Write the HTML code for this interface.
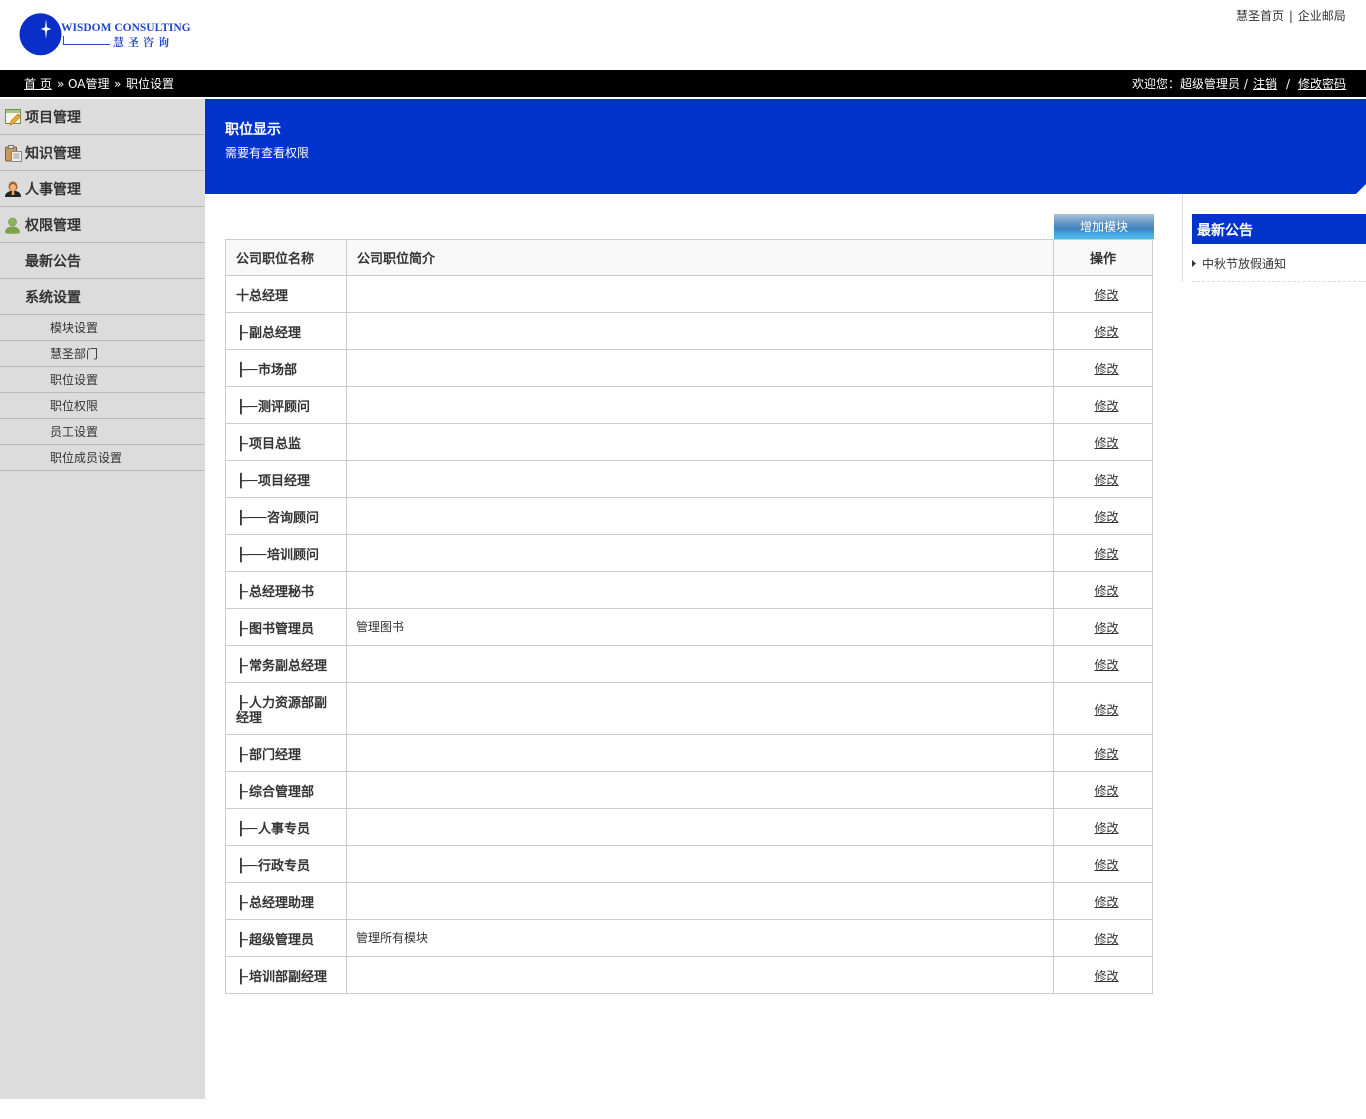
<!DOCTYPE html>
<html><head><meta charset="utf-8"><title>职位设置</title>
<style>
*{box-sizing:border-box}
html,body{margin:0;padding:0;background:#fff}
body{position:relative;width:1366px;height:1119px;overflow:hidden;font:12px/16px "DejaVu Sans",sans-serif;color:#333}
.a{position:absolute;white-space:nowrap}
a{color:inherit}
#bar{position:absolute;left:0;top:70px;width:1366px;height:27px;background:#000}
#side{position:absolute;left:0;top:99px;width:205px;height:1000px;background:#dcdcdc}
.m{position:absolute;left:0;width:205px;height:36px;border-bottom:1px solid #b9b9b9;font-size:14px;font-weight:bold;color:#333;line-height:38px;padding-left:25px}
.s{position:absolute;left:0;width:205px;height:26px;border-bottom:1px solid #b9b9b9;line-height:26px;padding-left:50px;color:#333}
.m svg{position:absolute;left:5px;top:10px}
#hero{position:absolute;left:205px;top:99px;width:1161px;height:95px;background:#0033cc}
table{position:absolute;left:225px;top:239px;width:928px;border-collapse:collapse;table-layout:fixed}
td,th{border:1px solid #ccc;padding:0 10px;color:#333;font-size:12px;line-height:14px}
th{background:#f8f8f8;font-size:13px;text-align:left;height:36px;padding-top:5px}
td{height:37px}
td:nth-child(2){padding-left:9px}
td:first-child{font-size:13px;font-weight:bold;padding-top:4px;line-height:15px}
td:last-child{text-align:center;padding:2px 0 0 7px}
th:last-child{text-align:center;padding:5px 0 0 0}
.t{display:inline-block;width:13px;text-indent:1px;font-style:normal;transform:scaleX(1.75);transform-origin:5px 50%}
.d{display:inline-block;width:9px;font-style:normal;margin-left:-1px;margin-right:1px;transform:scaleX(1.2);transform-origin:0 50%}
</style></head><body>

<svg class="a" style="left:15px;top:8px" width="60" height="52" viewBox="0 0 60 52">
<circle cx="25.500" cy="26.300" r="21" fill="#0a2fc8"/>
<circle cx="31" cy="21" r="2" fill="#fff"/>
<path d="M31 11L32 19.500L36.500 21L32 22.500L31 31L30 22.500L25.500 21L30 19.500Z" fill="#fff"/>
</svg>
<div class="a" style="left:61px;top:21px;font:bold 11.5px/15px 'Liberation Serif',serif;color:#2446c8">WISDOM CONSULTING</div>
<div class="a" style="left:63px;top:36px;width:47px;height:9px;border-left:1px solid #2a4bd0;border-bottom:1px solid #2a4bd0"></div>
<div class="a" style="left:113px;top:35px;font:bold 11px/14px 'Noto Serif CJK SC',serif;color:#2446c8;letter-spacing:4px">慧圣咨询</div>

<div class="a" style="left:1236px;top:8px;color:#333">慧圣首页 <span style="margin:0 1px">|</span> 企业邮局</div>

<div id="bar"></div>
<div class="a" style="left:24px;top:76px;color:#fff"><a href="#" style="text-decoration:underline">首 页</a></div>
<div class="a" style="left:57px;top:76px;color:#fff">»</div>
<div class="a" style="left:68px;top:76px;color:#fff">OA管理</div>
<div class="a" style="left:114px;top:76px;color:#fff">»</div>
<div class="a" style="left:126px;top:76px;color:#fff">职位设置</div>
<div class="a" style="left:1132px;top:76px;color:#fff">欢迎您：超级管理员 /</div>
<div class="a" style="left:1253px;top:76px;color:#fff"><a href="#">注销</a></div>
<div class="a" style="left:1286px;top:76px;color:#fff">/</div>
<div class="a" style="left:1298px;top:76px;color:#fff"><a href="#">修改密码</a></div>

<div id="side">
<div class="m" style="top:0"><svg width="17" height="17" viewBox="0 0 17 17"><rect x=".5" y=".5" width="15" height="14" fill="#f4f7e4" stroke="#6f8f4e"/><rect x="1" y="1" width="14" height="3" fill="#a9c588"/><path d="M5 16l1-4 7-7 2.500 2.500-7 7z" fill="#f0a93a" stroke="#b8701c" stroke-width=".7"/></svg>项目管理</div>
<div class="m" style="top:36px"><svg width="17" height="17" viewBox="0 0 17 17"><rect x=".5" y="2" width="11" height="14" rx="1" fill="#c9975a" stroke="#8a5f2c"/><rect x="3.500" y=".5" width="5" height="3" fill="#ddd" stroke="#777"/><rect x="6.500" y="6.500" width="10" height="10" fill="#eee" stroke="#888"/><path d="M8.500 9h6M8.500 11h6M8.500 13h6" stroke="#999"/></svg>知识管理</div>
<div class="m" style="top:72px"><svg width="17" height="17" viewBox="0 0 17 17"><path d="M0 16c0-4 3-5 5.500-6h5.500c3 1 5 2 5 6z" fill="#222"/><ellipse cx="8" cy="5.500" rx="4.500" ry="5" fill="#a9602e"/><ellipse cx="8" cy="6.500" rx="3" ry="3.500" fill="#eeb27a"/><path d="M7 10h2l.5 4h-3z" fill="#e8b13a"/></svg>人事管理</div>
<div class="m" style="top:108px"><svg width="17" height="17" viewBox="0 0 17 17"><circle cx="7.500" cy="5" r="4" fill="#8eb35a" stroke="#6c8f3e" stroke-width=".6"/><path d="M0 16c0-4.500 3-6.500 7.500-6.500s7.500 2 7.500 6.500c-3 1-12 1-15 0z" fill="#7da24a"/></svg>权限管理</div>
<div class="m" style="top:144px">最新公告</div>
<div class="m" style="top:180px">系统设置</div>
<div class="s" style="top:216px">模块设置</div>
<div class="s" style="top:242px">慧圣部门</div>
<div class="s" style="top:268px">职位设置</div>
<div class="s" style="top:294px">职位权限</div>
<div class="s" style="top:320px">员工设置</div>
<div class="s" style="top:346px">职位成员设置</div>
</div>

<div id="hero">
<div class="a" style="left:20px;top:22px;color:#fff;font-size:14px;font-weight:bold;line-height:19px">职位显示</div>
<div class="a" style="left:20px;top:46px;color:#fff">需要有查看权限</div>
<svg class="a" style="right:0;bottom:0" width="10" height="10"><path d="M10 0V10H0Z" fill="#fff"/></svg>
</div>

<div class="a" style="left:1054px;top:214px;width:100px;height:25px;background:linear-gradient(#a9c3dc 0,#5f93c4 40%,#3a82bd 60%,#44b2ea 85%,#4cb8ee 100%);color:#fff;text-align:center;line-height:26px;">增加模块</div>

<table>
<colgroup><col style="width:121px"><col style="width:707px"><col style="width:99px"></colgroup>
<tr><th>公司职位名称</th><th>公司职位简介</th><th>操作</th></tr>
<tr><td>十总经理</td><td></td><td><a href="#">修改</a></td></tr>
<tr><td><i class="t">├</i>副总经理</td><td></td><td><a href="#">修改</a></td></tr>
<tr><td><i class="t">├</i><i class="d">─</i>市场部</td><td></td><td><a href="#">修改</a></td></tr>
<tr><td><i class="t">├</i><i class="d">─</i>测评顾问</td><td></td><td><a href="#">修改</a></td></tr>
<tr><td><i class="t">├</i>项目总监</td><td></td><td><a href="#">修改</a></td></tr>
<tr><td><i class="t">├</i><i class="d">─</i>项目经理</td><td></td><td><a href="#">修改</a></td></tr>
<tr><td><i class="t">├</i><i class="d">─</i><i class="d">─</i>咨询顾问</td><td></td><td><a href="#">修改</a></td></tr>
<tr><td><i class="t">├</i><i class="d">─</i><i class="d">─</i>培训顾问</td><td></td><td><a href="#">修改</a></td></tr>
<tr><td><i class="t">├</i>总经理秘书</td><td></td><td><a href="#">修改</a></td></tr>
<tr><td><i class="t">├</i>图书管理员</td><td>管理图书</td><td><a href="#">修改</a></td></tr>
<tr><td><i class="t">├</i>常务副总经理</td><td></td><td><a href="#">修改</a></td></tr>
<tr style="height:52px"><td style="height:52px"><i class="t">├</i>人力资源部副经理</td><td></td><td><a href="#">修改</a></td></tr>
<tr><td><i class="t">├</i>部门经理</td><td></td><td><a href="#">修改</a></td></tr>
<tr><td><i class="t">├</i>综合管理部</td><td></td><td><a href="#">修改</a></td></tr>
<tr><td><i class="t">├</i><i class="d">─</i>人事专员</td><td></td><td><a href="#">修改</a></td></tr>
<tr><td><i class="t">├</i><i class="d">─</i>行政专员</td><td></td><td><a href="#">修改</a></td></tr>
<tr><td><i class="t">├</i>总经理助理</td><td></td><td><a href="#">修改</a></td></tr>
<tr><td><i class="t">├</i>超级管理员</td><td>管理所有模块</td><td><a href="#">修改</a></td></tr>
<tr><td><i class="t">├</i>培训部副经理</td><td></td><td><a href="#">修改</a></td></tr>
</table>

<div class="a" style="left:1182px;top:194px;width:1px;height:88px;background:#ddd"></div>
<div class="a" style="left:1192px;top:214px;width:174px;height:30px;background:#0033cc;color:#fff;font-size:14px;font-weight:bold;line-height:34px;padding-left:5px">最新公告</div>
<svg class="a" style="left:1192px;top:260px" width="4" height="7"><path d="M0 0L4 3.500L0 7Z" fill="#333"/></svg>
<div class="a" style="left:1202px;top:256px;color:#333">中秋节放假通知</div>
<div class="a" style="left:1192px;top:281px;width:174px;border-top:1px dashed #ddd"></div>
</body></html>
